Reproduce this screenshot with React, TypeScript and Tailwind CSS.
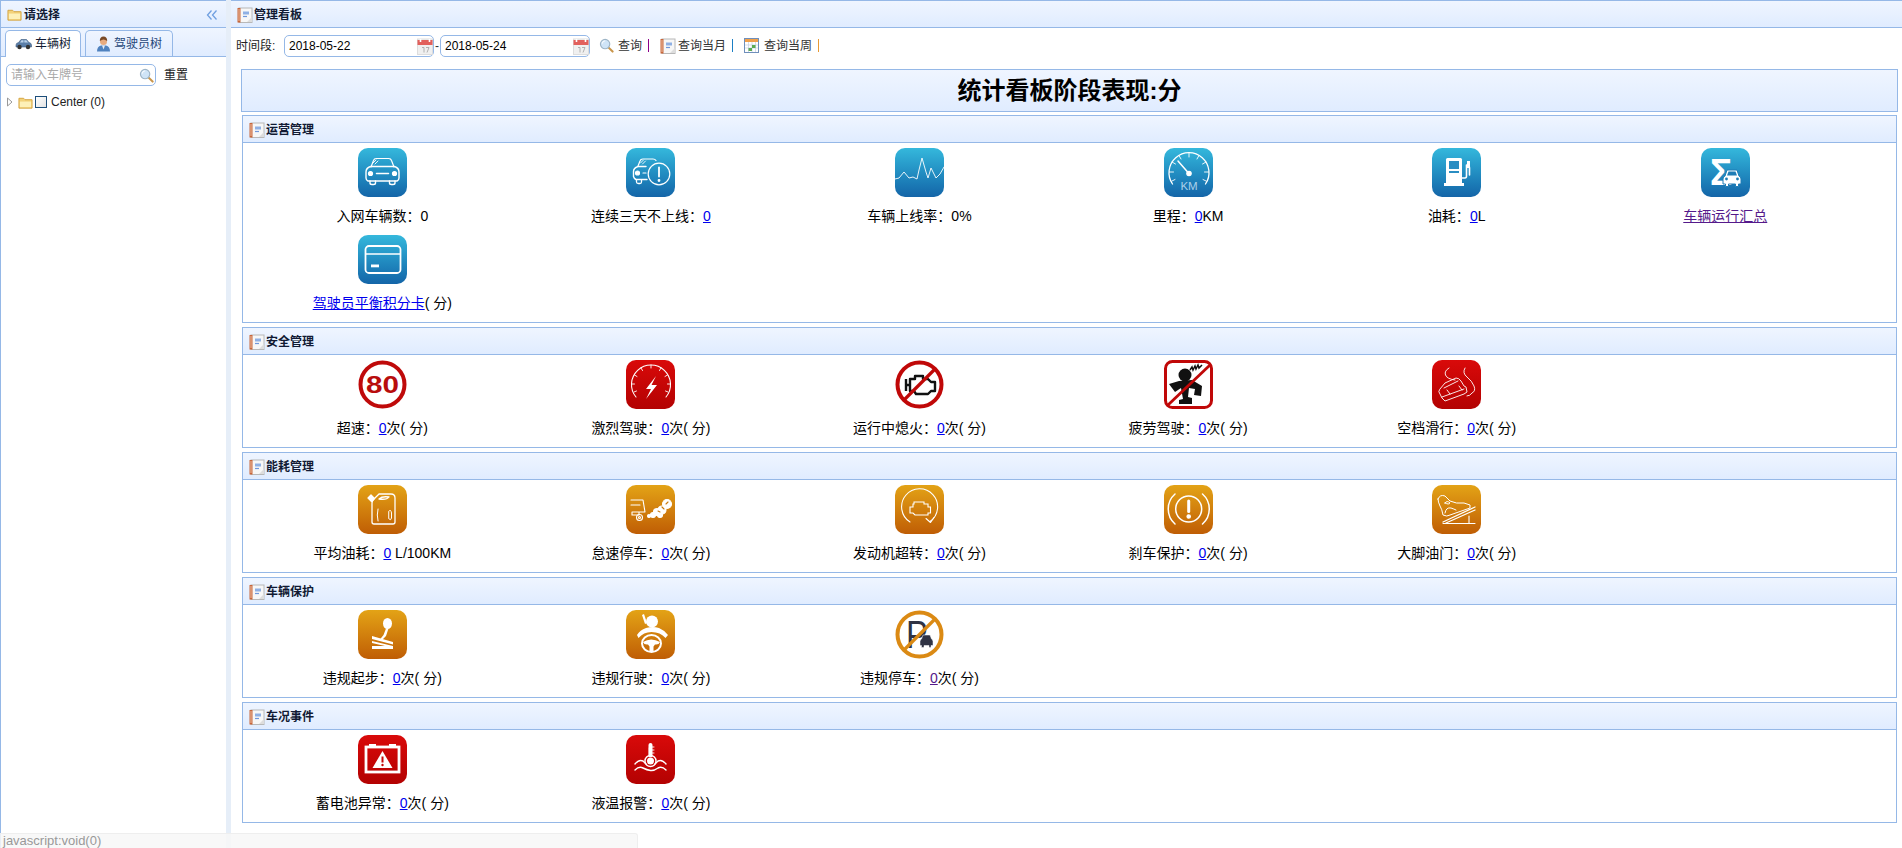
import type { ReactNode } from 'react'

const W = { fill: 'none', stroke: '#fff', strokeWidth: 1.2, strokeLinecap: 'round', strokeLinejoin: 'round' } as const

function Notebook() {
  return (
    <svg width="16" height="16" viewBox="0 0 16 16" className="shrink-0">
      <rect x="2" y="1" width="13" height="14.500" fill="#f7f7f7" stroke="#b8b8b8" />
      <rect x="0.500" y="1" width="3" height="14.500" fill="#c8663a" />
      <path d="M1 3h2M1 5h2M1 7h2M1 9h2M1 11h2M1 13h2" stroke="#f4d6c0" strokeWidth="0.800" />
      <path d="M6 4.500h6v3H6" fill="#8fb0e4" />
      <path d="M6 9.500h4" stroke="#6f97db" strokeWidth="1.200" />
      <path d="M10 15l5-5v5z" fill="#ddd" />
    </svg>
  )
}

function Folder({ size = 16 }: { size?: number }) {
  return (
    <svg width={size} height={size} viewBox="0 0 16 16" className="shrink-0">
      <path d="M1 3.500h5l1.500 1.500H15v9H1z" fill="#f3d27a" stroke="#d3a23f" />
      <path d="M2 7h12v6H2z" fill="#fdf0b8" />
    </svg>
  )
}

function Magnifier({ size = 16 }: { size?: number }) {
  return (
    <svg width={size} height={size} viewBox="0 0 16 16" className="shrink-0">
      <path d="M10 10l4.500 4.500" stroke="#c9954a" strokeWidth="2.200" strokeLinecap="round" />
      <circle cx="6.500" cy="6.500" r="5" fill="#cfe4f7" stroke="#9db4c6" strokeWidth="1.200" />
      <path d="M3.500 6a3 3 0 0 1 3-3" stroke="#fff" fill="none" />
    </svg>
  )
}

function CalendarPick() {
  return (
    <svg width="16" height="17" viewBox="0 0 16 17" className="shrink-0">
      <rect x="0.500" y="1" width="15" height="15.500" fill="#f0f0f0" stroke="#ddd" />
      <rect x="0.500" y="2" width="15" height="5" fill="#e2605c" />
      <path d="M3.500 1v3M12.500 1v3" stroke="#fff" strokeWidth="1.600" />
      <path d="M5 9.500h2v5M9 9.500h3l-2 5" fill="none" stroke="#a9a9a9" strokeWidth="0.900" />
    </svg>
  )
}

function CalendarGrid() {
  return (
    <svg width="15" height="15" viewBox="0 0 15 15" className="shrink-0">
      <rect x="0.500" y="0.500" width="14" height="14" fill="#fff" stroke="#6f8fbb" />
      <rect x="1" y="1" width="13" height="3" fill="#f0a04b" />
      <path d="M1 7h13M1 10h13M4.500 4v10M8 4v10M11.500 4v10" stroke="#c3cfdf" strokeWidth="0.700" />
      <rect x="8" y="7" width="3.500" height="3" fill="#5cab53" />
      <rect x="4.500" y="10" width="3.500" height="3" fill="#5cab53" />
    </svg>
  )
}

function TabCar() {
  return (
    <svg width="17" height="12" viewBox="0 0 17 12" className="shrink-0">
      <path d="M1 7q0-2 2.500-2.500L6 1.500h5.500L14 4.500q2.500.5 2.500 2.500v2H1z" fill="#5a7ea8" stroke="#3d5a80" strokeWidth="0.600" />
      <path d="M6.500 2.200h2v2.400h-3.500zM9.300 2.200h2l1.800 2.400H9.300z" fill="#bcd3ea" />
      <circle cx="4.500" cy="9" r="2.200" fill="#333" />
      <circle cx="13" cy="9" r="2.200" fill="#333" />
    </svg>
  )
}

function TabDriver() {
  return (
    <svg width="15" height="16" viewBox="0 0 15 16" className="shrink-0">
      <path d="M1 15.500q0-5 4-6h5q4 1 4 6z" fill="#4f82bf" />
      <path d="M6 9.500h3l-1.500 4z" fill="#e8eef5" />
      <circle cx="7.500" cy="5.500" r="3.500" fill="#e7ab7f" />
      <path d="M3.800 5q0-4.500 3.700-4.500T11.200 5Q9 3.500 7.500 3.500T3.800 5z" fill="#7a4a26" />
    </svg>
  )
}

function Tile({ tone, children }: { tone: 'blue' | 'red' | 'orange'; children: ReactNode }) {
  const bg =
    tone === 'blue'
      ? 'from-[#35b8dc] to-[#1465a8]'
      : tone === 'red'
        ? 'from-[#d90a0a] to-[#b30202]'
        : 'from-[#e3a316] to-[#bf5d05]'
  return (
    <div className={`h-[49px] w-[49px] overflow-hidden rounded-[10px] bg-gradient-to-b ${bg}`}>
      <svg width="49" height="49" viewBox="0 0 49 49">
        {children}
      </svg>
    </div>
  )
}

function Bare({ children }: { children: ReactNode }) {
  return (
    <svg width="49" height="49" viewBox="0 0 49 49">
      {children}
    </svg>
  )
}

const carFront = (
  <g {...W}>
    <path d="M13 19l2.500-6.500q.6-2 2.800-2h12.400q2.200 0 2.800 2L36 19" />
    <path d="M8 24q0-4 4.500-5.500h24Q41 20 41 24v6q0 2-2 3H10q-2-1-2-3z" strokeWidth="1.400" />
    <path d="M12 33v2q0 1.500 2 1.500h1.500q2 0 2-1.500v-2M31.500 33v2q0 1.500 2 1.500H35q2 0 2-1.500v-2" strokeWidth="1.400" />
    <circle cx="12.500" cy="25.500" r="2" fill="#fff" />
    <circle cx="36.500" cy="25.500" r="2" fill="#fff" />
    <path d="M18.500 25.500h12" strokeWidth="1.500" />
    <path d="M15 15l3-3M17 16l3-3" strokeWidth="0.900" />
  </g>
)

const carAlert = (
  <g {...W}>
    <path d="M12 18l2-5q.6-2 2.800-2H27q2 0 3 1.500" />
    <path d="M21 31.500H10q-2-1-2.500-3v-5q0-3.500 4.500-5h8" strokeWidth="1.400" />
    <path d="M10.500 32v2q0 1.500 2 1.500h1.500q1.500 0 1.500-1.500v-2" strokeWidth="1.300" />
    <circle cx="11.500" cy="25" r="2" fill="#fff" />
    <path d="M17 25h3" />
    <path d="M14.500 15l3-3M16.500 16l3-3" strokeWidth="0.900" />
    <circle cx="33" cy="26" r="10.800" />
    <path d="M33 19.500v9" strokeWidth="1.800" />
    <circle cx="33" cy="32.500" r="0.800" fill="#fff" />
  </g>
)

const wave = <polyline {...W} strokeWidth={0.900} points="0,31 4,30 9,24 14,30 18,29 22,31 24,22 27,10 31,24 33,30 36,20 41,30 45,26 49,19" />

const gauge = (
  <g {...W}>
    <path d="M8.500 36A20 20 0 1 1 41.500 36" strokeWidth="1.300" />
    <path d="M25 5v4M15 7.500l2 3.500M8 14l3.500 2M5.500 24h4M35 7.500l-2 3.500M42 14l-3.500 2M44.500 24h-4M8 33l3-1.500M42 33l-3-1.500" strokeWidth="0.900" />
    <path d="M14 13l10.500 12" strokeWidth="1.500" />
    <circle cx="25" cy="25.500" r="2.200" fill="#fff" />
    <text x="25" y="42" textAnchor="middle" fontSize="11.500" fontFamily="Liberation Sans, sans-serif" fill="#a9d1ea" stroke="none">KM</text>
  </g>
)

const pump = (
  <g>
    <rect x="14" y="10" width="16" height="26" rx="1.500" fill="#fff" />
    <rect x="12" y="35" width="20" height="3" fill="#fff" />
    <rect x="17" y="13" width="10" height="8" fill="#2a8dc2" />
    <rect x="17" y="23" width="10" height="2" fill="#2a8dc2" />
    <path d="M30 30h3q1.500 0 1.500-2V17q3 0 3 3v7" {...W} strokeWidth={1.600} />
    <rect x="35" y="13" width="3" height="7" fill="#fff" />
  </g>
)

const sigma = (
  <g>
    <text x="9" y="37" fontSize="37" fontWeight="700" fontFamily="Liberation Sans, sans-serif" fill="#fff">Σ</text>
    <path d="M22 31q0-2.500 2-3l2-6h10l2 6q2 .5 2 3v5h-2.500v2.500h-3V36h-7v2.500h-3V36H22z" fill="#fff" stroke="#1f7db6" strokeWidth="1" />
    <path d="M27.500 23.500h7l1.500 4H26z" fill="#1f7db6" />
    <circle cx="25.500" cy="31" r="1.400" fill="#1f7db6" />
    <circle cx="36.500" cy="31" r="1.400" fill="#1f7db6" />
  </g>
)

const card = (
  <g>
    <rect x="7.500" y="11" width="35" height="27" rx="3.500" fill="none" stroke="#fff" strokeWidth="1.800" />
    <path d="M8 19h34" stroke="#fff" strokeWidth="1.500" />
    <rect x="13" y="29.500" width="8" height="2.800" fill="#fff" />
  </g>
)

const speed80 = (
  <Bare>
    <circle cx="24.500" cy="24.500" r="22" fill="#fff" stroke="#bf0a0a" strokeWidth="4" />
    <text x="24.500" y="33" textAnchor="middle" fontSize="24" fontWeight="700" textLength="33" lengthAdjust="spacingAndGlyphs" fontFamily="Liberation Sans, sans-serif" fill="#b80d0d">80</text>
  </Bare>
)

const hardDrive = (
  <g {...W}>
    <path d="M10 37A19.500 19.500 0 1 1 40 37" strokeWidth="1.100" />
    <path d="M25 5v3M15 8l1.500 2.500M8.500 15l2.500 1.500M5.500 24h3M35 8l-1.500 2.500M41.500 15L39 16.500M44.500 24h-3M8 32l2.500-1M42 32l-2.500-1" strokeWidth="0.900" />
    <path d="M30 16L20 29h5l-5 10 11-14h-5.500z" fill="#fff" stroke="none" />
  </g>
)

const engineOff = (
  <Bare>
    <circle cx="24.500" cy="24.500" r="22" fill="#fff" stroke="#c00808" strokeWidth="4" />
    <path d="M15 19h5v-3h8v3h5l3 3h4v9h-4l-3 3H21l-2-3h-4zM11 19v12M11 25h4" fill="none" stroke="#111" strokeWidth="2.400" strokeLinejoin="round" />
    <path d="M40 9L9 40" stroke="#c00808" strokeWidth="3.200" />
  </Bare>
)

const fatigue = (
  <Bare>
    <rect x="1.500" y="1.500" width="46" height="46" rx="7" fill="#fff" stroke="#c00808" strokeWidth="3" />
    <circle cx="21" cy="15" r="6.500" fill="#111" />
    <path d="M15 21l13-1 10 6-1 10-7-1 1-6-6-1-1 9 4 1v6H15v-4l4-1-2-11-6 4-6-8z" fill="#111" />
    <path d="M26 10l2-3 1 3 2-4 1 3 2-4 1 3 3-3" fill="none" stroke="#111" strokeWidth="1.500" />
    <path d="M46 5L4 45" stroke="#c00808" strokeWidth="2.800" />
  </Bare>
)

const coasting = (
  <g {...W} strokeWidth={0.900}>
    <path d="M17 8q-5 3-3.500 7t9.500 5" />
    <path d="M33 8q-3 5 2 9t7 9-2 7q-2 3-5 3" />
    <path d="M8 29l5-6 11-5q3 0 5 3l3 5 2 1 1 5-3 2-19 7-3-3-3-6z" />
    <path d="M12 28l14-7M10 37l22-8M15 30l3 4M27 26l3 4" />
  </g>
)

const oilJug = (
  <g {...W} strokeWidth={1.300}>
    <path d="M14 18q0-2 2-4l5-5h12q4 0 4 4v24q0 2-2 2H16q-2 0-2-2z" />
    <path d="M10 13l3-3 3.500 3.500-3 3z" fill="#fff" />
    <path d="M21 14q3-3 10-2-2 3-10 2z" />
    <path d="M20 24q-1.500 6 0 12M31 26q2-2 2.500 2v5q-.5 3-2.500 1z" strokeWidth="1" />
  </g>
)

const idle = (
  <g {...W} strokeWidth={1.100}>
    <path d="M5 15h12l2 12H8M5 20h9M6 27h7v3H6z" />
    <circle cx="13.500" cy="32.500" r="3" />
    <circle cx="13.500" cy="32.500" r="1" />
    <g fill="#fff">
      <circle cx="23" cy="31" r="1.500" />
      <circle cx="27" cy="30" r="2.500" />
      <circle cx="31" cy="27" r="3.500" />
      <circle cx="36" cy="25" r="4" />
      <circle cx="41" cy="19" r="4.500" />
      <circle cx="34" cy="30" r="2.500" />
    </g>
    <path d="M36 22l2 2M42 17l-2 2M32 26l2 1" stroke="#c97a10" />
  </g>
)

const overRev = (
  <g {...W} strokeWidth={1.100}>
    <path d="M15 37A18 18 0 1 1 35 36.500" />
    <path d="M31 33.500l4.500 4 3.500-5" />
    <path d="M19 17h10v2h4v3h2.500v6H33v2H20l-2-2h-3v-6h3v-3h1z" strokeLinejoin="miter" />
  </g>
)

const brake = (
  <g {...W}>
    <circle cx="24.700" cy="24" r="13" strokeWidth="1.500" />
    <path d="M11 9a20 20 0 0 0 0 30M38.500 9a20 20 0 0 1 0 30" strokeWidth="1.500" />
    <path d="M24.700 16v10.500" strokeWidth="3" />
    <circle cx="24.700" cy="31.500" r="1.700" fill="#fff" />
  </g>
)

const pedal = (
  <g {...W} strokeWidth={1}>
    <path d="M6 14q2-5 7-3l5 5q6 3 14 2l6 2v3l-20 7q-3 2-7 0-1-6-3-9-2-4-2-7z" />
    <path d="M13 18q2-3 5 0-1 2-5 0zM13 28q1-6 6-5 3 1 5 2" />
    <path d="M11 37l32-15M14 38l29-13" strokeWidth="1.300" />
    <path d="M11 38.500h32M37 31v7" strokeWidth="1.100" />
  </g>
)

const stick = (
  <g fill="#fff">
    <ellipse cx="29.500" cy="13.500" rx="4.500" ry="5.500" />
    <path d="M28 18.500h2.500L28 26l-5 5-1.500-1 4-5z" />
    <path d="M14 26l21 6v2.500L14 29zM14 31l21 5v3H14v-3h13l-13-3z" />
  </g>
)

const beltDriver = (
  <g>
    <ellipse cx="26" cy="11.500" rx="6" ry="6" fill="#fff" />
    <path d="M16 5l2-1 3 9-2 1z" fill="#fff" />
    <path d="M20 18q-6 2-9 7l1.500 3q5-6 13-6 9 0 14 6l2.500-3q-4-5-9-7-6-2-13 0z" fill="#fff" />
    <ellipse cx="25.500" cy="33.500" rx="9.500" ry="8.500" fill="none" stroke="#fff" strokeWidth="2" />
    <path d="M17 32q8-5 17 0-1 3-5 2.500l-1.500 2v5h-4v-5l-1.500-2q-4 .5-5-2.500z" fill="#fff" />
  </g>
)

const noParking = (
  <Bare>
    <circle cx="24.500" cy="24.500" r="22" fill="#fff" stroke="#db8a14" strokeWidth="4" />
    <text x="11" y="38" fontSize="38" textLength="22" lengthAdjust="spacingAndGlyphs" fontFamily="Liberation Sans, sans-serif" fill="#2f3344">P</text>
    <path d="M25 31.500q0-2 1.500-2.500l1.500-4h7l1.500 4q1.500.5 1.500 2.500v4h-2v2h-2v-2h-5v2h-2.500v-2H25z" fill="#2f3344" stroke="#fff" strokeWidth="0.500" />
    <path d="M40 9L9 40" stroke="#db8a14" strokeWidth="3.200" />
  </Bare>
)

const battery = (
  <g>
    <path d="M11 9h7v3H11zM31 9h7v3h-7z" fill="#fff" />
    <rect x="8" y="12" width="33" height="25" fill="none" stroke="#fff" strokeWidth="2.800" />
    <path d="M24.500 16l10 17h-20z" fill="#fff" />
    <path d="M24.500 21.500v6" stroke="#c40606" strokeWidth="2" />
    <circle cx="24.500" cy="30" r="1.200" fill="#c40606" />
  </g>
)

const coolant = (
  <g {...W}>
    <path d="M22.500 22V10q0-2 2-2t2 2v12" fill="#fff" stroke="none" />
    <circle cx="24.500" cy="26" r="5.500" strokeWidth="1.400" />
    <circle cx="24.500" cy="26" r="3.500" fill="#fff" stroke="none" />
    <path d="M24 21v-8" stroke="#fff" strokeWidth="2.500" />
    <path d="M26 12h2M26 15h2M26 18h2" strokeWidth="0.900" />
    <path d="M9 29q4-5 8-3l3 3M29 29l3-3q4-2 8 3" strokeWidth="1.400" />
    <path d="M9 35q4-4 8-2t7.500 2.500T32 33q4-2 8 2" strokeWidth="1.400" />
  </g>
)

type Item = { icon: ReactNode; label: ReactNode; value?: string; tail?: string; visited?: boolean }

const times = '次( 分)'

const sections: { title: string; items: Item[] }[] = [
  {
    title: '运营管理',
    items: [
      { icon: <Tile tone="blue">{carFront}</Tile>, label: '入网车辆数：', tail: '0' },
      { icon: <Tile tone="blue">{carAlert}</Tile>, label: '连续三天不上线：', value: '0' },
      { icon: <Tile tone="blue">{wave}</Tile>, label: '车辆上线率：', tail: '0%' },
      { icon: <Tile tone="blue">{gauge}</Tile>, label: '里程：', value: '0', tail: 'KM' },
      { icon: <Tile tone="blue">{pump}</Tile>, label: '油耗：', value: '0', tail: 'L' },
      { icon: <Tile tone="blue">{sigma}</Tile>, label: '', value: '车辆运行汇总', visited: true },
      { icon: <Tile tone="blue">{card}</Tile>, label: '', value: '驾驶员平衡积分卡', tail: '( 分)' },
    ],
  },
  {
    title: '安全管理',
    items: [
      { icon: speed80, label: '超速：', value: '0', tail: times },
      { icon: <Tile tone="red">{hardDrive}</Tile>, label: '激烈驾驶：', value: '0', tail: times },
      { icon: engineOff, label: '运行中熄火：', value: '0', tail: times },
      { icon: fatigue, label: '疲劳驾驶：', value: '0', tail: times },
      { icon: <Tile tone="red">{coasting}</Tile>, label: '空档滑行：', value: '0', tail: times },
    ],
  },
  {
    title: '能耗管理',
    items: [
      { icon: <Tile tone="orange">{oilJug}</Tile>, label: '平均油耗：', value: '0', tail: ' L/100KM' },
      { icon: <Tile tone="orange">{idle}</Tile>, label: '怠速停车：', value: '0', tail: times },
      { icon: <Tile tone="orange">{overRev}</Tile>, label: '发动机超转：', value: '0', tail: times },
      { icon: <Tile tone="orange">{brake}</Tile>, label: '刹车保护：', value: '0', tail: times },
      { icon: <Tile tone="orange">{pedal}</Tile>, label: '大脚油门：', value: '0', tail: times },
    ],
  },
  {
    title: '车辆保护',
    items: [
      { icon: <Tile tone="orange">{stick}</Tile>, label: '违规起步：', value: '0', tail: times },
      { icon: <Tile tone="orange">{beltDriver}</Tile>, label: '违规行驶：', value: '0', tail: times },
      { icon: noParking, label: '违规停车：', value: '0', tail: times, visited: true },
    ],
  },
  {
    title: '车况事件',
    items: [
      { icon: <Tile tone="red">{battery}</Tile>, label: '蓄电池异常：', value: '0', tail: times },
      { icon: <Tile tone="red">{coolant}</Tile>, label: '液温报警：', value: '0', tail: times },
    ],
  },
]

function Section({ title, items }: { title: string; items: Item[] }) {
  return (
    <div className="mb-1 ml-px w-[1655px] border border-[#95b8e7]">
      <div className="flex h-[27px] items-center gap-[1px] border-b border-[#95b8e7] bg-gradient-to-b from-[#eff5ff] to-[#e0ecff] pt-px pl-[6px] text-xs font-bold text-[#111a33]">
        <Notebook />
        <span>{title}</span>
      </div>
      <div className="grid grid-cols-[repeat(6,268.6px)] pt-[5px] pl-[5px]">
        {items.map((item, i) => (
          <div key={i} className="flex h-[87px] flex-col items-center">
            {item.icon}
            <div className="mt-[9px] whitespace-pre text-sm leading-5 text-black">
              {item.label}
              {item.value && (
                <a href="#" className={item.visited ? 'text-[#551a8b] underline' : 'text-[#0000ee] underline'}>
                  {item.value}
                </a>
              )}
              {item.tail}
            </div>
          </div>
        ))}
      </div>
    </div>
  )
}

function Sidebar() {
  return (
    <div className="flex w-[226px] shrink-0 flex-col border-l border-[#95b8e7]">
      <div className="flex h-[28px] items-center justify-between border-y border-[#95b8e7] bg-gradient-to-b from-[#eff5ff] to-[#e0ecff] pt-px pr-[8px] pl-[6px] text-xs font-bold text-[#111a33]">
        <div className="flex items-center gap-[2px]">
          <Folder size={15} />
          <span>请选择</span>
        </div>
        <svg width="12" height="12" viewBox="0 0 12 12">
          <path d="M5.500 1.500L1.500 6l4 4.500M10.500 1.500L6.500 6l4 4.500" fill="none" stroke="#6f9fe0" strokeWidth="1.300" />
        </svg>
      </div>
      <div className="flex h-[29px] items-end gap-[4px] border-b border-[#95b8e7] bg-gradient-to-b from-[#eff5ff] to-[#e0ecff] pl-[4px] text-xs text-[#111a33]">
        <div className="-mb-px flex h-[27px] w-[76px] items-center justify-center gap-[3px] rounded-t-[5px] border border-b-0 border-[#95b8e7] bg-white">
          <TabCar />
          <span>车辆树</span>
        </div>
        <div className="flex h-[26px] w-[88px] items-center justify-center gap-[3px] rounded-t-[5px] border border-b-0 border-[#95b8e7] bg-gradient-to-b from-[#eff5ff] to-[#e0ecff] text-[#26477a]">
          <TabDriver />
          <span>驾驶员树</span>
        </div>
      </div>
      <div className="flex items-center pt-[7px] pl-[5px]">
        <div className="flex h-[22px] w-[150px] items-center justify-between rounded-[5px] border border-[#95b8e7] pr-[1px] pl-[4px] text-xs text-[#aaa]">
          <span>请输入车牌号</span>
          <Magnifier size={15} />
        </div>
        <span className="ml-[8px] text-xs text-[#222]">重置</span>
      </div>
      <div className="flex items-center pt-[8px] pl-[6px] text-xs text-[#222]">
        <svg width="6" height="10" viewBox="0 0 6 10" className="shrink-0">
          <path d="M.5 1l4.500 4-4.500 4z" fill="#fff" stroke="#999" />
        </svg>
        <span className="ml-[5px]">
          <Folder size={15} />
        </span>
        <span className="ml-[2px] h-[12px] w-[12px] border border-[#1d4e7a] bg-gradient-to-br from-white to-[#e3e3e3]" />
        <span className="ml-[4px]">Center (0)</span>
      </div>
    </div>
  )
}

function DateBox({ value }: { value: string }) {
  return (
    <div className="flex h-[22px] w-[150px] items-center justify-between rounded-[5px] border border-[#95b8e7] pl-[4px] text-xs text-black">
      <span>{value}</span>
      <CalendarPick />
    </div>
  )
}

function Toolbar() {
  return (
    <div className="flex h-[41px] items-start pt-[7px] pl-[5px] text-xs leading-[22px] text-[#333]">
      <span className="w-[48px] shrink-0 text-[#222]">时间段:</span>
      <DateBox value="2018-05-22" />
      <span className="mx-[1px] w-[4px] text-center">-</span>
      <DateBox value="2018-05-24" />
      <span className="ml-[9px] pt-[3px]">
        <Magnifier size={15} />
      </span>
      <span className="ml-[4px]">查询</span>
      <span className="mt-[4px] ml-[6px] h-[13px] w-px bg-[#8b008b]" />
      <span className="ml-[11px] pt-[3px]">
        <Notebook />
      </span>
      <span className="ml-[2px]">查询当月</span>
      <span className="mt-[4px] ml-[6px] h-[13px] w-px bg-[#1b7fc4]" />
      <span className="ml-[11px] pt-[3px]">
        <CalendarGrid />
      </span>
      <span className="ml-[5px]">查询当周</span>
      <span className="mt-[4px] ml-[6px] h-[13px] w-px bg-[#e89a35]" />
    </div>
  )
}

export default function App() {
  return (
    <div className="relative flex h-[848px] w-[1902px] overflow-hidden bg-white font-['Liberation_Sans','Noto_Sans_CJK_SC',sans-serif]">
      <Sidebar />
      <div className="w-[5px] shrink-0 bg-[#e6eef8]" />
      <div className="flex min-w-0 flex-1 flex-col">
        <div className="flex h-[28px] items-center gap-[1px] border-y border-[#95b8e7] bg-gradient-to-b from-[#eff5ff] to-[#e0ecff] pt-px pl-[6px] text-xs font-bold text-[#111a33]">
          <Notebook />
          <span>管理看板</span>
        </div>
        <Toolbar />
        <div className="ml-[10px]">
          <div className="mb-[3px] flex h-[43px] w-[1657px] items-center justify-center border border-[#95b8e7] bg-gradient-to-b from-[#eff5ff] to-[#e0ecff] text-2xl font-bold text-black">
            统计看板阶段表现:分
          </div>
          {sections.map(s => (
            <Section key={s.title} title={s.title} items={s.items} />
          ))}
        </div>
      </div>
      <div className="absolute bottom-0 left-0 h-[15px] w-[638px] overflow-hidden rounded-tr-[3px] border-t border-r border-[#eeeeee] bg-[#f7f7f7]/85 pl-[3px] text-[13px] leading-[14px] text-[#999]">
        javascript:void(0)
      </div>
    </div>
  )
}
